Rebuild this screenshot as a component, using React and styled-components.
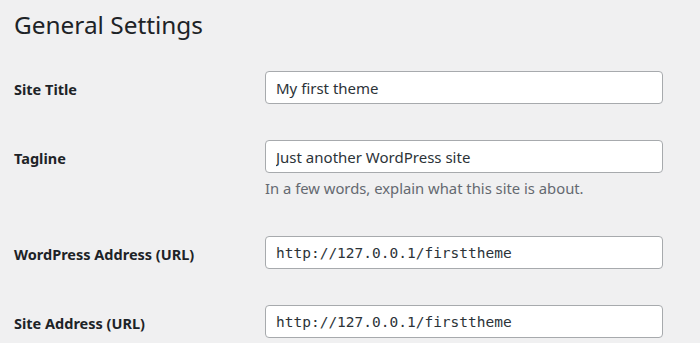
import styled, { createGlobalStyle } from 'styled-components';

const GlobalStyle = createGlobalStyle`
  body {
    margin: 0;
    background: #f0f0f1;
    color: #1d2327;
    font-family: "Noto Sans", "Open Sans", sans-serif;
  }
`;

const Wrap = styled.div`
  padding: 0 14px;
`;

const Heading = styled.h1`
  margin: 0;
  padding: 6px 0 0;
  font-size: 24.4px;
  font-weight: 400;
  line-height: 38px;
  color: #1d2327;
`;

const Form = styled.div`
  display: flex;
  flex-direction: column;
  margin-top: 10px;
`;

const Row = styled.div`
  display: grid;
  grid-template-columns: 251px 398px;
  padding: 17px 0 ${(p) => (p.$tight ? '20px' : '17px')};
  align-items: start;
`;

const Label = styled.label`
  font-size: 14.5px;
  font-weight: 700;
  line-height: 33px;
  padding-top: 2px;
`;

const Field = styled.div`
  display: flex;
  flex-direction: column;
`;

const Input = styled.input`
  box-sizing: border-box;
  width: 398px;
  height: 33px;
  margin: 0;
  padding: 0 10px;
  border: 1px solid #a7aaad;
  border-radius: 4px;
  background: #fff;
  color: #2c3338;
  font-family: ${(p) =>
    p.$code ? '"DejaVu Sans Mono", "Liberation Mono", monospace' : '"Noto Sans", "Open Sans", sans-serif'};
  font-size: ${(p) => (p.$code ? '14.5px' : '15px')};
  outline: none;
`;

const Description = styled.p`
  margin: 4px 0 0;
  font-size: 14.8px;
  line-height: 22px;
  color: #646970;
`;

const fields = [
  { label: 'Site Title', value: 'My first theme' },
  {
    label: 'Tagline',
    value: 'Just another WordPress site',
    description: 'In a few words, explain what this site is about.',
  },
  { label: 'WordPress Address (URL)', value: 'http://127.0.0.1/firsttheme', code: true },
  { label: 'Site Address (URL)', value: 'http://127.0.0.1/firsttheme', code: true },
];

const App = () => (
  <Wrap>
    <GlobalStyle />
    <Heading>General Settings</Heading>
    <Form>
      {fields.map((f) => (
        <Row key={f.label} $tight={!!f.description}>
          <Label>{f.label}</Label>
          <Field>
            <Input defaultValue={f.value} $code={f.code} />
            {f.description && <Description>{f.description}</Description>}
          </Field>
        </Row>
      ))}
    </Form>
  </Wrap>
);

export default App;
